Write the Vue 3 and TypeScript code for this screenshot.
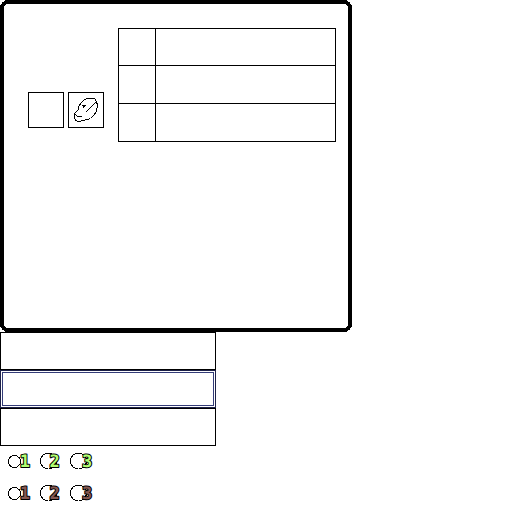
<script setup lang="ts">
interface Badge { digit: string; size: string; x: number }
const badges: Badge[] = [
  { digit: '1', size: 'small', x: 11.7 },
  { digit: '2', size: 'large', x: 9.6 },
  { digit: '3', size: 'large', x: 12 },
]
const tones: string[] = ['green', 'brown']
</script>

<template>
  <main class="screen">
    <section class="panel">
      <svg class="frame" viewBox="0 0 352 332" shape-rendering="crispEdges">
        <rect x="2" y="2" width="348" height="328" rx="6" />
      </svg>
      <div class="slots">
        <div class="slot"></div>
        <div class="slot">
          <svg width="36" height="36" viewBox="0 0 36 36" shape-rendering="crispEdges">
            <path d="M19.5 6.5H26.5L28.5 9.5L29.5 13.5L28.5 19.5L25.5 23.5L22.5 26.5L15.5 28.5L10.5 29.5L7.5 28.5L6.5 25.5V21.5L10.5 17.5V14.5L13.5 10.5L16.5 7.5Z" />
            <path d="M28.5 9.5L17.5 20.5M6.5 21.5L9.5 24.5H13.5" />
            <path class="eye" d="M14 13H18V14H17V15H16V16H15V14H14Z" />
          </svg>
        </div>
      </div>
      <div class="table">
        <div v-for="n in 3" :key="n" class="row"><div class="cell"></div></div>
      </div>
    </section>
    <div class="bars">
      <div class="bar"></div>
      <div class="bar selected"><div class="inner"></div></div>
      <div class="bar"></div>
    </div>
    <div class="badges">
      <div v-for="tone in tones" :key="tone" class="badge-row" :class="tone">
        <svg v-for="b in badges" :key="b.digit" class="badge" :class="b.size" viewBox="0 0 24 20">
          <circle v-if="b.size === 'small'" cx="6.5" cy="11.5" r="6" shape-rendering="crispEdges" />
          <circle v-else cx="8.5" cy="11" r="8" shape-rendering="crispEdges" />
          <text :x="b.x" y="17.3">{{ b.digit }}</text>
        </svg>
      </div>
    </div>
  </main>
</template>

<style>
html, body { margin: 0; background: #fff; }
</style>

<style scoped>
* { box-sizing: border-box; }
.screen { width: 512px; height: 512px; overflow: hidden; background: #fff; }
.panel { position: relative; width: 352px; height: 332px; padding: 28px 0 0 28px; display: flex; align-items: flex-start; gap: 14px; }
.frame { position: absolute; inset: 0; width: 352px; height: 332px; fill: none; stroke: #000; stroke-width: 4; }
.slots { display: flex; gap: 4px; padding-top: 64px; }
.slot { width: 36px; height: 36px; border: 1px solid #000; }
.slot svg { display: block; margin: -1px; fill: none; stroke: #000; stroke-width: 1; }
.slot .eye { fill: #000; stroke: none; }
.table { width: 218px; height: 114px; border: 1px solid #000; display: grid; grid-template-rows: 37px 38px 37px; }
.row { border-bottom: 1px solid #000; }
.row:last-child { border-bottom: 0; }
.cell { width: 37px; height: 100%; border-right: 1px solid #000; }
.bars { width: 216px; }
.bar { height: 38px; border: 1px solid #000; }
.selected { padding: 1px; border-color: #1c2048; }
.inner { height: 34px; border: 1px solid #343c78; }
.badges { padding: 4px 0 0 8px; }
.badge-row { display: flex; height: 32px; }
.badge { display: block; width: 24px; height: 20px; overflow: visible; margin-right: 6px; }
.badge.small { margin-right: 8px; }
.badge circle { fill: #fff; stroke: #000; stroke-width: 1; }
.badge text { font: bold 17px "DejaVu Sans Mono", monospace; stroke: #000; stroke-width: 2px; stroke-linejoin: round; paint-order: stroke; text-rendering: geometricPrecision; }
.green text { fill: #b3ff70; }
.brown text { fill: #855850; }
</style>
